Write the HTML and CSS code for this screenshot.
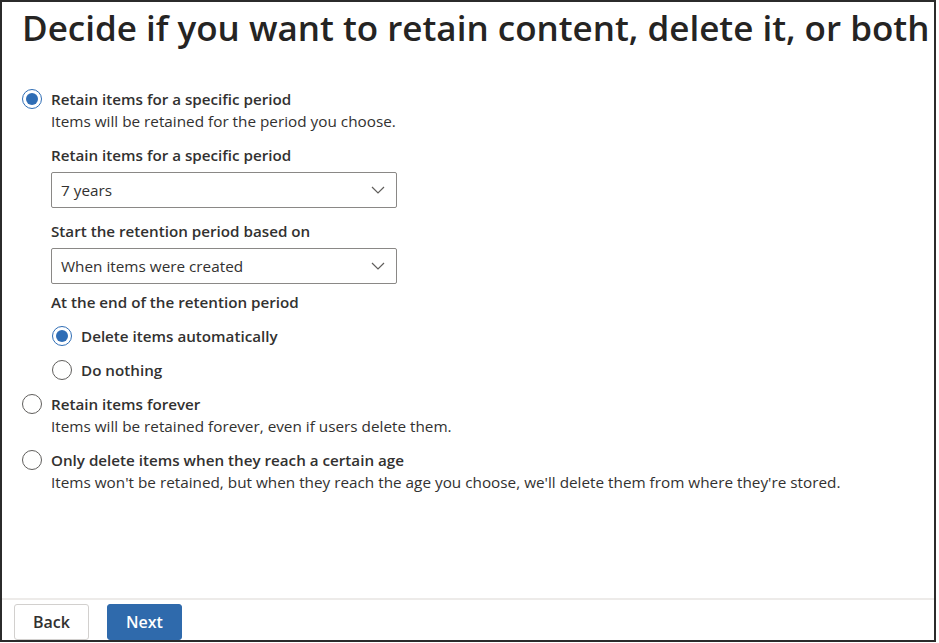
FILE: index.html
```html
<!DOCTYPE html>
<html lang="en">
<head>
    <meta charset="UTF-8">
    <meta name="viewport" content="width=device-width, initial-scale=1.0">
    <title>Retention settings</title>
    <link rel="stylesheet" href="styles.css">
</head>
<body>
    <div class="wizard">
        <div class="wizard-body">
            <h1>Decide if you want to retain content, delete it, or both</h1>

            <div class="choice">
                <div class="radio-row">
                    <span class="radio checked"></span>
                    <span class="radio-label">Retain items for a specific period</span>
                </div>
                <div class="choice-desc">Items will be retained for the period you choose.</div>

                <div class="sub-options">
                    <div class="field-label">Retain items for a specific period</div>
                    <div class="dropdown">
                        <span>7 years</span>
                        <svg class="chevron" width="14" height="8" viewBox="0 0 14 8"><path d="M1 1l6 6 6-6" fill="none" stroke="#605e5c" stroke-width="1.2"/></svg>
                    </div>

                    <div class="field-label">Start the retention period based on</div>
                    <div class="dropdown last">
                        <span>When items were created</span>
                        <svg class="chevron" width="14" height="8" viewBox="0 0 14 8"><path d="M1 1l6 6 6-6" fill="none" stroke="#605e5c" stroke-width="1.2"/></svg>
                    </div>

                    <div class="field-label end-label">At the end of the retention period</div>
                    <div class="radio-row sub">
                        <span class="radio checked"></span>
                        <span class="radio-label">Delete items automatically</span>
                    </div>
                    <div class="radio-row sub">
                        <span class="radio"></span>
                        <span class="radio-label">Do nothing</span>
                    </div>
                </div>
            </div>

            <div class="choice">
                <div class="radio-row">
                    <span class="radio"></span>
                    <span class="radio-label">Retain items forever</span>
                </div>
                <div class="choice-desc">Items will be retained forever, even if users delete them.</div>
            </div>

            <div class="choice">
                <div class="radio-row">
                    <span class="radio"></span>
                    <span class="radio-label">Only delete items when they reach a certain age</span>
                </div>
                <div class="choice-desc">Items won't be retained, but when they reach the age you choose, we'll delete them from where they're stored.</div>
            </div>
        </div>

        <div class="wizard-footer">
            <button class="btn">Back</button>
            <button class="btn primary">Next</button>
        </div>
    </div>
</body>
</html>
```

FILE: styles.css
```css
body {
    margin: 0;
    background: #fff;
    font-family: "Open Sans", Arial, sans-serif;
    color: #323130;
}

.wizard {
    width: 936px;
    height: 642px;
    box-sizing: border-box;
    border: 2px solid #2b2b2b;
    display: flex;
    flex-direction: column;
}

.wizard-body {
    flex: 1;
    padding: 0 20px;
}

h1 {
    font-size: 35px;
    font-weight: 600;
    line-height: 44px;
    margin: 4px 0 38px 0;
    color: #252423;
    white-space: nowrap;
}

.choice {
    margin-bottom: 12px;
}

.radio-row {
    display: flex;
    align-items: center;
    gap: 9px;
    height: 22px;
}

.radio {
    width: 20px;
    height: 20px;
    box-sizing: border-box;
    border: 1px solid #605e5c;
    border-radius: 50%;
    position: relative;
    flex-shrink: 0;
}

.radio.checked {
    border-color: #2f6db5;
}

.radio.checked::after {
    content: "";
    position: absolute;
    left: 3px;
    top: 3px;
    width: 12px;
    height: 12px;
    border-radius: 50%;
    background: #2f6db5;
}

.radio-label {
    font-size: 15.2px;
    font-weight: 600;
}

.choice-desc {
    font-size: 15.3px;
    line-height: 22px;
    margin-left: 29px;
    white-space: nowrap;
}

.sub-options {
    margin-left: 29px;
    padding-top: 12px;
}

.field-label {
    font-size: 15.2px;
    font-weight: 600;
    line-height: 22px;
    margin-bottom: 6px;
}

.end-label {
    margin-bottom: 12px;
}

.dropdown {
    width: 346px;
    height: 36px;
    box-sizing: border-box;
    border: 1px solid #8a8886;
    border-radius: 2px;
    display: flex;
    align-items: center;
    justify-content: space-between;
    padding: 0 11px 0 9px;
    font-size: 15.3px;
    margin-bottom: 12px;
}

.dropdown.last {
    margin-bottom: 7px;
}

.radio-row.sub {
    margin-left: 1px;
    margin-bottom: 12px;
}

.radio-row.sub:last-child {
    margin-bottom: 0;
}

.wizard-footer {
    border-top: 2px solid #edebe9;
    padding: 4px 12px 0 12px;
    height: 42px;
    box-sizing: border-box;
    display: flex;
    gap: 18px;
}

.btn {
    width: 75px;
    height: 36px;
    font-family: "Open Sans", Arial, sans-serif;
    font-size: 16px;
    font-weight: 600;
    border: 1px solid #d2d0ce;
    border-radius: 3px;
    background: #fff;
    color: #323130;
}

.btn.primary {
    background: #2f6aac;
    border-color: #2f6aac;
    color: #fff;
}
```
